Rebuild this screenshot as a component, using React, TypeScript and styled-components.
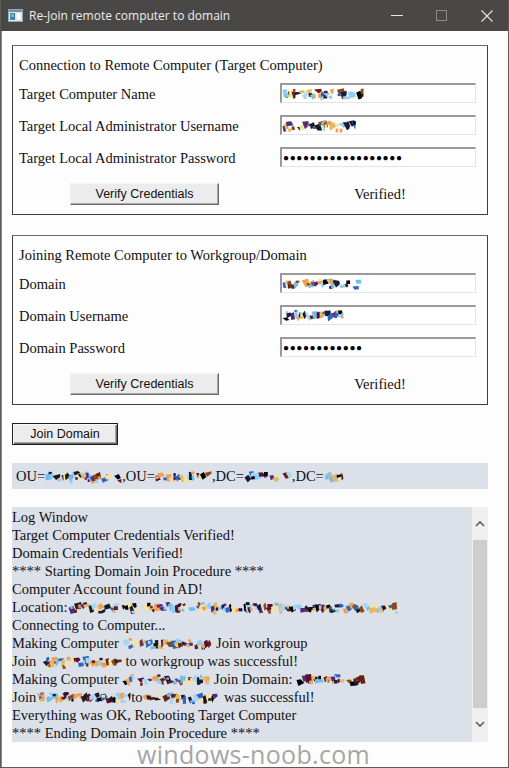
import React from 'react';
import styled, { createGlobalStyle } from 'styled-components';

const GlobalStyle = createGlobalStyle`
  html, body { margin: 0; padding: 0; background: #fdfdfd; }
  * { box-sizing: border-box; }
`;

const PALETTE = ['#1b1b3c', '#5c0f2e', '#6fbfee', '#f7e39a', '#f0a04f', '#000000', '#2f64c0', '#8a4a18', '#a6d6f4', '#55277a', '#e6b860', '#1a1a1a', '#8fd0f2', '#6a1f10'];

function rng(seed: number) {
  let s = seed % 2147483647;
  if (s <= 0) s += 2147483646;
  return () => {
    s = (s * 16807) % 2147483647;
    return (s - 1) / 2147483646;
  };
}

const ScrambleSvg = styled.svg`
  display: inline-block;
  vertical-align: middle;
  flex: none;
`;

const Scramble: React.FC<{ w: number; seed: number; h?: number }> = ({ w, seed, h = 15 }) => {
  const r = rng(seed * 7919 + 17);
  const shapes: React.ReactNode[] = [];
  let x = 0.5;
  let i = 0;
  while (x < w - 3) {
    if (r() < 0.08) {
      x += 2 + r() * 4;
      continue;
    }
    const bw = 3 + r() * 5;
    const bh = 3 + r() * 6;
    const y = 2 + r() * (h - bh - 3);
    const c = PALETTE[Math.floor(r() * PALETTE.length)];
    const pts = [
      [x, y + r() * bh * 0.4],
      [x + bw * (0.5 + r() * 0.5), y],
      [x + bw, y + bh * (0.4 + r() * 0.6)],
      [x + bw * r() * 0.6, y + bh],
    ]
      .map((p) => `${Math.min(p[0], w - 0.5).toFixed(1)},${p[1].toFixed(1)}`)
      .join(' ');
    shapes.push(<polygon key={i++} points={pts} fill={c} />);
    if (r() < 0.5) {
      const c2 = PALETTE[Math.floor(r() * PALETTE.length)];
      const x2 = x + r() * bw;
      const y2 = 2 + r() * (h - 6);
      shapes.push(<rect key={i++} x={Math.min(x2, w - 3)} y={y2} width={2 + r() * 2} height={2 + r() * 2} fill={c2} />);
    }
    x += bw * (0.35 + r() * 0.45);
  }
  return (
    <ScrambleSvg width={w} height={h} viewBox={`0 0 ${w} ${h}`}>
      {shapes}
    </ScrambleSvg>
  );
};

const Window = styled.div`
  width: 509px;
  height: 768px;
  display: flex;
  flex-direction: column;
  border: 1px solid #5b5b5b;
  border-top: none;
  background: #fdfdfd;
  position: relative;
  overflow: hidden;
`;

const TitleBar = styled.div`
  height: 31px;
  flex: none;
  background: #4a4846;
  display: flex;
  align-items: center;
  padding-left: 8px;
  margin: 0 -1px;
`;

const TitleText = styled.div`
  font-family: 'Open Sans', 'Noto Sans', sans-serif;
  font-size: 12px;
  color: #ececec;
  margin-left: 6px;
  flex: 1;
  padding-bottom: 1px;
`;

const CaptionButton = styled.div<{ $dim?: boolean }>`
  width: 45px;
  height: 31px;
  display: flex;
  align-items: center;
  justify-content: center;
  opacity: ${(p) => (p.$dim ? 0.45 : 1)};
`;

const Client = styled.div`
  flex: 1;
  display: flex;
  flex-direction: column;
  padding: 14px 20px 0 10px;
  border-left: 1px solid #8a8a8a;
`;

const GroupBox = styled.div<{ $mt?: number }>`
  height: 170px;
  border: 1px solid #3f3f3f;
  border-top-color: #6a6a6a;
  padding: 10px 10px 0 6px;
  margin-top: ${(p) => p.$mt ?? 0}px;
  display: flex;
  flex-direction: column;
`;

const serif = `'Liberation Serif', 'Times New Roman', serif`;
const sans = `'Liberation Sans', Arial, sans-serif`;

const GroupTitle = styled.div`
  font-family: ${serif};
  font-size: 14.5px;
  color: #111;
  height: 18px;
  line-height: 18px;
  margin-bottom: 3px;
`;

const FieldRow = styled.div`
  display: grid;
  grid-template-columns: 261px 196px;
  height: 32px;
  align-items: center;
`;

const Label = styled.div`
  font-family: ${serif};
  font-size: 14.5px;
  color: #111;
  padding-top: 3px;
`;

const TextBox = styled.div`
  height: 20px;
  background: #ffffff;
  border-top: 2px solid #9a9a9a;
  border-left: 2px solid #9a9a9a;
  border-right: 1px solid #e4e4e4;
  border-bottom: 1px solid #e4e4e4;
  display: flex;
  align-items: center;
  padding-left: 0;
  overflow: hidden;
`;

const Dots = styled.span`
  font-family: ${sans};
  font-size: 10px;
  letter-spacing: 0.6px;
  color: #000;
  line-height: 1;
  padding-top: 1px;
  padding-left: 1px;
`;

const ActionRow = styled.div`
  display: grid;
  grid-template-columns: 261px 196px;
  align-items: center;
  margin-top: 10px;
  height: 22px;
`;

const ButtonCell = styled.div`
  padding-left: 51px;
`;

const WinButton = styled.div<{ $w: number; $focused?: boolean }>`
  width: ${(p) => p.$w}px;
  height: 22px;
  background: #ececec;
  border: 1px solid;
  border-color: ${(p) => (p.$focused ? '#1e1e1e' : '#f4f4f4 #6a6a6a #6a6a6a #f4f4f4')};
  box-shadow: ${(p) =>
    p.$focused ? 'inset 1px 1px 0 #fafafa, inset -1px -1px 0 #6a6a6a, inset -2px -2px 0 #a8a8a8' : 'inset -1px -1px 0 #a8a8a8'};
  font-family: ${sans};
  font-size: 12.5px;
  color: #111;
  display: flex;
  align-items: center;
  justify-content: center;
  padding-bottom: 1px;
`;

const Verified = styled.div`
  font-family: ${serif};
  font-size: 14.5px;
  color: #111;
  text-align: center;
  padding-left: 4px;
`;

const JoinRow = styled.div`
  margin-top: 18px;
`;

const OuBar = styled.div`
  margin-top: 18px;
  height: 26px;
  background: #dce0e9;
  display: flex;
  align-items: center;
  padding-left: 4px;
  font-family: ${serif};
  font-size: 14.5px;
  color: #111;
  white-space: nowrap;
`;

const LogBox = styled.div`
  margin-top: 18px;
  height: 235px;
  display: flex;
  background: #dce0e9;
`;

const LogText = styled.div`
  flex: 1;
  padding-top: 1px;
  overflow: hidden;
`;

const LogLine = styled.div`
  height: 18px;
  line-height: 18px;
  font-family: ${serif};
  font-size: 14.5px;
  color: #111;
  white-space: nowrap;
  display: flex;
  align-items: center;
`;

const Gap = styled.span<{ $w: number }>`
  display: inline-block;
  width: ${(p) => p.$w}px;
`;

const ScrollBar = styled.div`
  width: 16px;
  flex: none;
  background: #f0f0f0;
  display: flex;
  flex-direction: column;
  align-items: center;
`;

const ScrollArrow = styled.div`
  height: 33px;
  width: 16px;
  display: flex;
  align-items: center;
  justify-content: center;
`;

const Thumb = styled.div`
  width: 14px;
  height: 168px;
  background: #cdcdcd;
`;

const Watermark = styled.div`
  position: absolute;
  left: 0;
  right: 0;
  bottom: 2px;
  text-align: center;
  font-family: 'Open Sans', 'Noto Sans', sans-serif;
  font-size: 25px;
  line-height: 22px;
  color: #a6a6a6;
  letter-spacing: 0.3px;
  padding-right: 2px;
`;

const AppIcon = () => (
  <svg width="15" height="13" viewBox="0 0 15 13">
    <rect x="0.5" y="0.5" width="14" height="12" fill="#e8eef2" stroke="#9aa6ae" />
    <rect x="1" y="1" width="13" height="2" fill="#6b8fb0" />
    <rect x="2" y="4" width="5" height="7" fill="#3f7fbf" />
    <rect x="3" y="5" width="3" height="3" fill="#7fc06a" />
    <rect x="8" y="4" width="5" height="7" fill="#ffffff" stroke="#b8c4cc" strokeWidth="0.5" />
  </svg>
);

const Chevron: React.FC<{ up?: boolean }> = ({ up }) => (
  <svg width="10" height="7" viewBox="0 0 10 7">
    <polyline
      points={up ? '1,6 5,2 9,6' : '1,1 5,5 9,1'}
      fill="none"
      stroke="#606060"
      strokeWidth="1.6"
    />
  </svg>
);

const Field: React.FC<{ label: string; children: React.ReactNode }> = ({ label, children }) => (
  <FieldRow>
    <Label>{label}</Label>
    <TextBox>{children}</TextBox>
  </FieldRow>
);

export default function App() {
  return (
    <>
      <GlobalStyle />
      <Window>
        <TitleBar>
          <AppIcon />
          <TitleText>Re-Join remote computer to domain</TitleText>
          <CaptionButton>
            <svg width="12" height="2" viewBox="0 0 12 2">
              <rect width="12" height="1" fill="#e6e6e6" />
            </svg>
          </CaptionButton>
          <CaptionButton $dim>
            <svg width="11" height="11" viewBox="0 0 11 11">
              <rect x="0.5" y="0.5" width="10" height="10" fill="none" stroke="#dcdcdc" />
            </svg>
          </CaptionButton>
          <CaptionButton>
            <svg width="12" height="12" viewBox="0 0 12 12">
              <path d="M0.5 0.5 L11.5 11.5 M11.5 0.5 L0.5 11.5" stroke="#e6e6e6" strokeWidth="1.1" />
            </svg>
          </CaptionButton>
        </TitleBar>
        <Client>
          <GroupBox>
            <GroupTitle>Connection to Remote Computer (Target Computer)</GroupTitle>
            <Field label="Target Computer Name">
              <Scramble w={82} seed={11} />
            </Field>
            <Field label="Target Local Administrator Username">
              <Scramble w={74} seed={23} />
            </Field>
            <Field label="Target Local Administrator Password">
              <Dots>●●●●●●●●●●●●●●●●●●</Dots>
            </Field>
            <ActionRow>
              <ButtonCell>
                <WinButton $w={149}>Verify Credentials</WinButton>
              </ButtonCell>
              <Verified>Verified!</Verified>
            </ActionRow>
          </GroupBox>

          <GroupBox $mt={20}>
            <GroupTitle>Joining Remote Computer to Workgroup/Domain</GroupTitle>
            <Field label="Domain">
              <Scramble w={80} seed={37} />
            </Field>
            <Field label="Domain Username">
              <Scramble w={62} seed={41} />
            </Field>
            <Field label="Domain Password">
              <Dots>●●●●●●●●●●●●</Dots>
            </Field>
            <ActionRow>
              <ButtonCell>
                <WinButton $w={149}>Verify Credentials</WinButton>
              </ButtonCell>
              <Verified>Verified!</Verified>
            </ActionRow>
          </GroupBox>

          <JoinRow>
            <WinButton $w={106} $focused>
              Join Domain
            </WinButton>
          </JoinRow>

          <OuBar>
            OU=
            <Scramble w={77} seed={53} />
            ,OU=
            <Scramble w={57} seed={59} />
            ,DC=
            <Scramble w={36} seed={61} />
            <Gap $w={2} />
            <Scramble w={10} seed={67} />
            ,DC=
            <Scramble w={20} seed={71} />
          </OuBar>

          <LogBox>
            <LogText>
              <LogLine>Log Window</LogLine>
              <LogLine>Target Computer Credentials Verified!</LogLine>
              <LogLine>Domain Credentials Verified!</LogLine>
              <LogLine>**** Starting Domain Join Procedure ****</LogLine>
              <LogLine>Computer Account found in AD!</LogLine>
              <LogLine>
                Location:
                <Scramble w={330} seed={83} />
              </LogLine>
              <LogLine>Connecting to Computer...</LogLine>
              <LogLine>
                Making Computer&nbsp;
                <Scramble w={90} seed={89} />
                &nbsp;Join workgroup
              </LogLine>
              <LogLine>
                Join&nbsp;
                <Scramble w={82} seed={97} />
                &nbsp;to workgroup was successful!
              </LogLine>
              <LogLine>
                Making Computer&nbsp;
                <Scramble w={88} seed={101} />
                &nbsp;Join Domain:&nbsp;
                <Scramble w={70} seed={103} />
              </LogLine>
              <LogLine>
                Join
                <Scramble w={95} seed={107} />
                to
                <Scramble w={78} seed={109} />
                &nbsp;was successful!
              </LogLine>
              <LogLine>Everything was OK, Rebooting Target Computer</LogLine>
              <LogLine>**** Ending Domain Join Procedure ****</LogLine>
            </LogText>
            <ScrollBar>
              <ScrollArrow>
                <Chevron up />
              </ScrollArrow>
              <Thumb />
              <ScrollArrow>
                <Chevron />
              </ScrollArrow>
            </ScrollBar>
          </LogBox>
        </Client>
        <Watermark>windows-noob.com</Watermark>
      </Window>
    </>
  );
}
